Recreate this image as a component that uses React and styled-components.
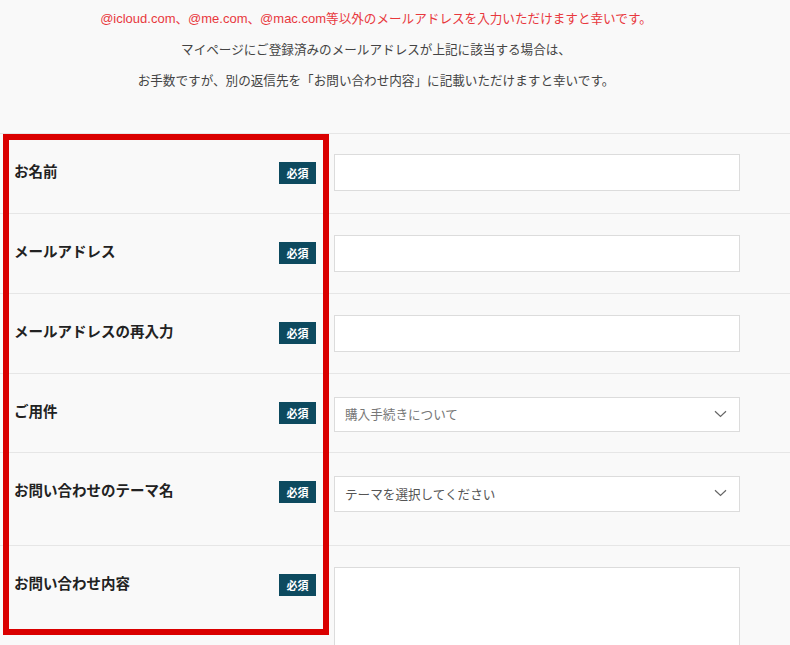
import React from "react";
import styled, { createGlobalStyle } from "styled-components";

const GlobalStyle = createGlobalStyle`
  html, body {
    margin: 0;
    padding: 0;
    background: #f9f9f9;
  }
  body {
    font-family: "Noto Sans CJK JP", "Noto Sans", sans-serif;
    color: #222;
  }
`;

const Page = styled.div`
  position: relative;
  width: 790px;
  height: 645px;
  overflow: hidden;
  background: #f9f9f9;
`;

const Notice = styled.div`
  width: 752px;
  padding: 2px 0 38px;
  text-align: center;
  font-size: 12.6px;
  line-height: 31px;
  color: #444;
`;

const NoticeLine = styled.p`
  margin: 0;
  height: 31px;
  color: ${(p) => (p.$alert ? "#e8383d" : "#444")};
`;

const Latin = styled.span`
  font-family: "Liberation Sans", Arial, sans-serif;
  font-size: 13px;
`;

const Form = styled.form`
  display: flex;
  flex-direction: column;
`;

const Row = styled.div`
  display: grid;
  grid-template-columns: 330px 1fr;
  align-items: start;
  border-top: 1px solid #e6e6e6;
`;

const LabelCell = styled.div`
  display: flex;
  align-items: center;
  justify-content: space-between;
  height: 22px;
  padding: 28px 14px 0 14px;
`;

const Label = styled.span`
  font-size: 14.5px;
  line-height: 22px;
  font-weight: 700;
  color: #222;
  transform: translateY(-2px);
`;

const Badge = styled.span`
  display: inline-flex;
  align-items: center;
  justify-content: center;
  width: 37px;
  height: 22px;
  background: #0d4a5f;
  color: #fff;
  font-size: 11px;
  line-height: 22px;
  font-weight: 700;
`;

const FieldCell = styled.div`
  padding: ${(p) => p.$pt}px 50px ${(p) => p.$pb}px 4px;
`;

const TextInput = styled.input`
  display: block;
  box-sizing: border-box;
  width: 406px;
  height: 37px;
  border: 1px solid #dcdcdc;
  background: #fff;
  outline: none;
`;

const SelectBox = styled.div`
  display: flex;
  align-items: center;
  justify-content: space-between;
  box-sizing: border-box;
  width: 406px;
  height: ${(p) => p.$h}px;
  padding: 0 12px 2px 10px;
  border: 1px solid #dcdcdc;
  background: #fff;
  font-size: 12.6px;
  color: ${(p) => p.$color};
`;

const TextArea = styled.textarea`
  display: block;
  box-sizing: border-box;
  width: 406px;
  height: 120px;
  border: 1px solid #dcdcdc;
  background: #fff;
  resize: none;
  outline: none;
`;

// 赤枠の注釈（ラベル列を囲む）
const Highlight = styled.div`
  position: absolute;
  left: 3px;
  top: 134px;
  width: 326px;
  height: 501px;
  box-sizing: border-box;
  border: 6px solid #da0000;
  pointer-events: none;
`;

function Chevron() {
  return (
    <svg width="13" height="8" viewBox="0 0 13 8" fill="none">
      <path d="M1 1.2 L6.5 6.5 L12 1.2" stroke="#666" strokeWidth="1.2" />
    </svg>
  );
}

const rows = [
  { label: "お名前", type: "input", pt: 20, pb: 22 },
  { label: "メールアドレス", type: "input", pt: 21, pb: 21 },
  { label: "メールアドレスの再入力", type: "input", pt: 21, pb: 21 },
  { label: "ご用件", type: "select", value: "購入手続きについて", color: "#777", h: 35, pt: 23, pb: 20 },
  { label: "お問い合わせのテーマ名", type: "select", value: "テーマを選択してください", color: "#555", h: 36, pt: 23, pb: 33 },
  { label: "お問い合わせ内容", type: "textarea", pt: 21, pb: 20 },
];

export default function App() {
  return (
    <Page>
      <GlobalStyle />
      <Notice>
        <NoticeLine $alert>
          <Latin>@icloud.com</Latin>、<Latin>@me.com</Latin>、<Latin>@mac.com</Latin>
          等以外のメールアドレスを入力いただけますと幸いです。
        </NoticeLine>
        <NoticeLine>マイページにご登録済みのメールアドレスが上記に該当する場合は、</NoticeLine>
        <NoticeLine>お手数ですが、別の返信先を「お問い合わせ内容」に記載いただけますと幸いです。</NoticeLine>
      </Notice>
      <Form>
        {rows.map((r) => (
          <Row key={r.label}>
            <LabelCell>
              <Label>{r.label}</Label>
              <Badge>必須</Badge>
            </LabelCell>
            <FieldCell $pt={r.pt} $pb={r.pb}>
              {r.type === "input" && <TextInput type="text" />}
              {r.type === "select" && (
                <SelectBox $h={r.h} $color={r.color}>
                  <span>{r.value}</span>
                  <Chevron />
                </SelectBox>
              )}
              {r.type === "textarea" && <TextArea />}
            </FieldCell>
          </Row>
        ))}
      </Form>
      <Highlight />
    </Page>
  );
}
